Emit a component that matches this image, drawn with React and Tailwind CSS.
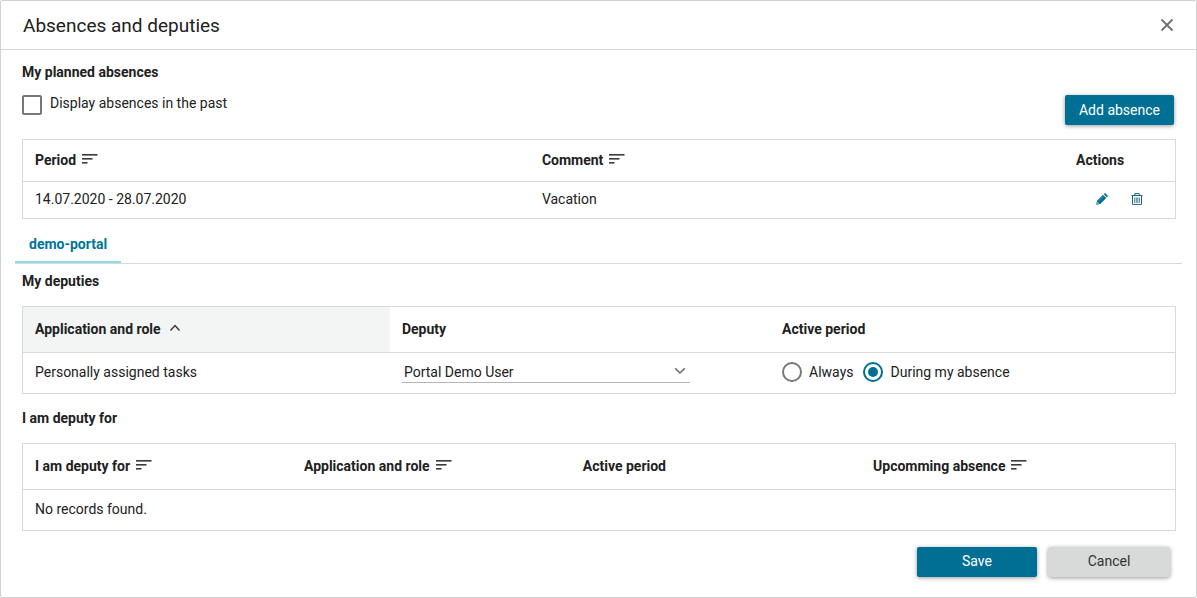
import { useState } from "react";

function SortIcon() {
  return (
    <svg className="mb-0.5 h-3 w-4 shrink-0" viewBox="0 0 16 12" fill="#3b3b3b" aria-hidden="true">
      <rect x="0" y="1" width="15.5" height="1.6" />
      <rect x="0" y="5" width="10.5" height="1.6" />
      <rect x="0" y="9" width="5.5" height="1.6" />
    </svg>
  );
}

function PencilIcon() {
  return (
    <svg className="size-3" viewBox="0 0 12 12" aria-hidden="true">
      <path
        d="M0.2 11.8 1 7.7 6.9 1.8 10.2 5.1 4.3 11ZM7.6 1.1 8.4 0.4Q9 0 9.6 0.4L11.6 2.4Q12 3 11.6 3.6L10.9 4.4Z"
        fill="#006f94"
      />
      <path d="M1.3 10.7 1.7 8.9 3.1 10.3Z" fill="#fff" />
      <path d="M2.8 7.6 7.2 3.2" stroke="#8fc3d4" strokeWidth="0.6" />
    </svg>
  );
}

function TrashIcon() {
  return (
    <svg className="size-3" viewBox="0 0 12 12" fill="none" stroke="#1d6580" aria-hidden="true">
      <path d="M0.5 2.5H11.5M3.8 2.4V0.6H8.2V2.4" />
      <path d="M1.5 2.5V11.4H10.5V2.5" />
      <path d="M3.7 4.4V9.8M5.3 4.4V9.8M6.8 4.4V9.8M8.4 4.4V9.8" strokeWidth="0.8" />
    </svg>
  );
}

function Th({ children, tall, className = "text-left" }) {
  return (
    <th
      scope="col"
      className={`${tall ? "h-[46px]" : "h-[42px]"} border-b border-[#d7d9d9] px-3 pb-0.5 font-bold ${className}`}
    >
      {children}
    </th>
  );
}

function SortButton({ children, icon }) {
  return (
    <button type="button" className="flex items-center gap-1.5 font-bold">
      {children}
      {icon ?? <SortIcon />}
    </button>
  );
}

function DataTable({ widths, label, children }) {
  return (
    <table
      aria-label={label}
      className="w-full table-fixed border-separate border-spacing-0 border border-[#d7d9d9]"
    >
      <colgroup>
        {widths.map((w, i) => (
          <col key={i} style={{ width: w }} />
        ))}
      </colgroup>
      {children}
    </table>
  );
}

const radioClass =
  "m-0 size-5 shrink-0 appearance-none rounded-full border-2 border-[#777] bg-white checked:border-[#006f94] checked:bg-[#006f94] checked:bg-clip-content checked:p-[3px]";

export default function App() {
  const [past, setPast] = useState(false);
  const [period, setPeriod] = useState("during");

  return (
    <div
      role="dialog"
      aria-labelledby="title"
      className="rounded-[2px] border border-[#d0d2d2] bg-white font-['Roboto',sans-serif] text-sm leading-5 text-[#212121]"
    >
      <header className="flex h-[49px] items-center justify-between border-b border-[#d7d9d9] pr-[21px] pl-[22px]">
        <h1 id="title" className="pt-0.5 text-[19px] leading-6">
          Absences and deputies
        </h1>
        <button type="button" aria-label="Close" className="p-px">
          <svg className="size-3.5" viewBox="0 0 14 14" stroke="#6f6f6f" strokeWidth="1.8" aria-hidden="true">
            <path d="M1.5 1.5 12.5 12.5M12.5 1.5 1.5 12.5" />
          </svg>
        </button>
      </header>

      <section className="pt-3 pr-5 pl-[21px]">
        <h2 className="font-bold">My planned absences</h2>
        <div className="flex items-start justify-between pt-[11px] pb-3.5">
          <label className="flex items-start gap-2">
            <input
              type="checkbox"
              checked={past}
              onChange={(e) => setPast(e.target.checked)}
              className="mt-0.5 size-5 appearance-none rounded-[2px] border-2 border-[#777] bg-white checked:bg-[#006f94]"
            />
            Display absences in the past
          </label>
          <button
            type="button"
            className="mt-0.5 mr-0.5 h-[30px] rounded-[2px] bg-[#006f94] px-3.5 text-white shadow-[0_1px_4px_rgba(0,0,0,0.4)]"
          >
            Add absence
          </button>
        </div>
        <DataTable label="My planned absences" widths={["44%", "43%", "13%"]}>
          <thead>
            <tr>
              <Th>
                <SortButton>Period</SortButton>
              </Th>
              <Th>
                <SortButton>Comment</SortButton>
              </Th>
              <Th className="text-center">Actions</Th>
            </tr>
          </thead>
          <tbody>
            <tr>
              <td className="h-9 px-3 pb-0.5">14.07.2020 - 28.07.2020</td>
              <td className="px-3 pb-0.5">Vacation</td>
              <td className="pr-8 pb-0.5">
                <div className="flex justify-end gap-[23px]">
                  <button type="button" aria-label="Edit absence">
                    <PencilIcon />
                  </button>
                  <button type="button" aria-label="Delete absence">
                    <TrashIcon />
                  </button>
                </div>
              </td>
            </tr>
          </tbody>
        </DataTable>
      </section>

      <div role="tablist" className="mx-3.5 flex border-b border-[#d7d9d9]">
        <button
          type="button"
          role="tab"
          aria-selected="true"
          className="border-b-2 border-[#8edce6] px-3.5 pt-[15px] pb-[7px] font-bold text-[#00759a]"
        >
          demo-portal
        </button>
      </div>

      <section className="pt-[7px] pr-5 pl-[21px]">
        <h2 className="pb-[15px] font-bold">My deputies</h2>
        <DataTable label="My deputies" widths={["31.85%", "33%", "35.15%"]}>
          <thead>
            <tr>
              <Th tall className="bg-[#f3f5f5] text-left">
                <SortButton
                  icon={
                    <svg className="mb-0.5 ml-0.5 size-3" viewBox="0 0 12 12" fill="none" stroke="#3b3b3b" strokeWidth="1.5" aria-hidden="true">
                      <path d="M1.5 8.4 6 3.6 10.5 8.4" />
                    </svg>
                  }
                >
                  Application and role
                </SortButton>
              </Th>
              <Th tall>Deputy</Th>
              <Th tall>Active period</Th>
            </tr>
          </thead>
          <tbody>
            <tr>
              <td className="h-10 px-3 pb-0.5">Personally assigned tasks</td>
              <td className="px-3 pb-0.5">
                <div className="grid w-72 max-w-full items-center border-b border-[#b5b5b5]">
                  <select
                    aria-label="Deputy"
                    defaultValue="Portal Demo User"
                    className="col-start-1 row-start-1 h-5 appearance-none bg-transparent px-0.5"
                  >
                    <option>Portal Demo User</option>
                  </select>
                  <svg className="pointer-events-none col-start-1 row-start-1 mr-1 mb-0.5 size-3 justify-self-end" viewBox="0 0 12 12" fill="none" stroke="#6f6f6f" strokeWidth="1.6" aria-hidden="true">
                    <path d="M1.3 3.4 6 8 10.7 3.4" />
                  </svg>
                </div>
              </td>
              <td className="px-3 pb-0.5">
                <div className="flex items-center gap-2.5">
                  <label className="flex items-center gap-[7px]">
                    <input
                      type="radio"
                      name="period"
                      checked={period === "always"}
                      onChange={() => setPeriod("always")}
                      className={radioClass}
                    />
                    Always
                  </label>
                  <label className="flex items-center gap-[7px]">
                    <input
                      type="radio"
                      name="period"
                      checked={period === "during"}
                      onChange={() => setPeriod("during")}
                      className={radioClass}
                    />
                    During my absence
                  </label>
                </div>
              </td>
            </tr>
          </tbody>
        </DataTable>
      </section>

      <section className="pt-3.5 pr-5 pl-[21px]">
        <h2 className="pb-[15px] font-bold">I am deputy for</h2>
        <DataTable label="I am deputy for" widths={["23.35%", "24.2%", "25.2%", "27.25%"]}>
          <thead>
            <tr>
              <Th tall>
                <SortButton>I am deputy for</SortButton>
              </Th>
              <Th tall>
                <SortButton>Application and role</SortButton>
              </Th>
              <Th tall>Active period</Th>
              <Th tall>
                <SortButton>Upcomming absence</SortButton>
              </Th>
            </tr>
          </thead>
          <tbody>
            <tr>
              <td colSpan={4} className="h-10 px-3 pb-0.5">
                No records found.
              </td>
            </tr>
          </tbody>
        </DataTable>
      </section>

      <footer className="flex justify-end gap-[11px] pt-4 pr-[26px] pb-5">
        <button
          type="button"
          className="h-[30px] w-[120px] rounded-[2px] bg-[#006f94] pb-0.5 text-white shadow-[0_1px_4px_rgba(0,0,0,0.4)]"
        >
          Save
        </button>
        <button
          type="button"
          className="h-[30px] w-[122px] rounded-[3px] bg-[#d8dad9] pb-0.5 text-[#333] shadow-[0_1px_4px_rgba(0,0,0,0.4)]"
        >
          Cancel
        </button>
      </footer>
    </div>
  );
}
